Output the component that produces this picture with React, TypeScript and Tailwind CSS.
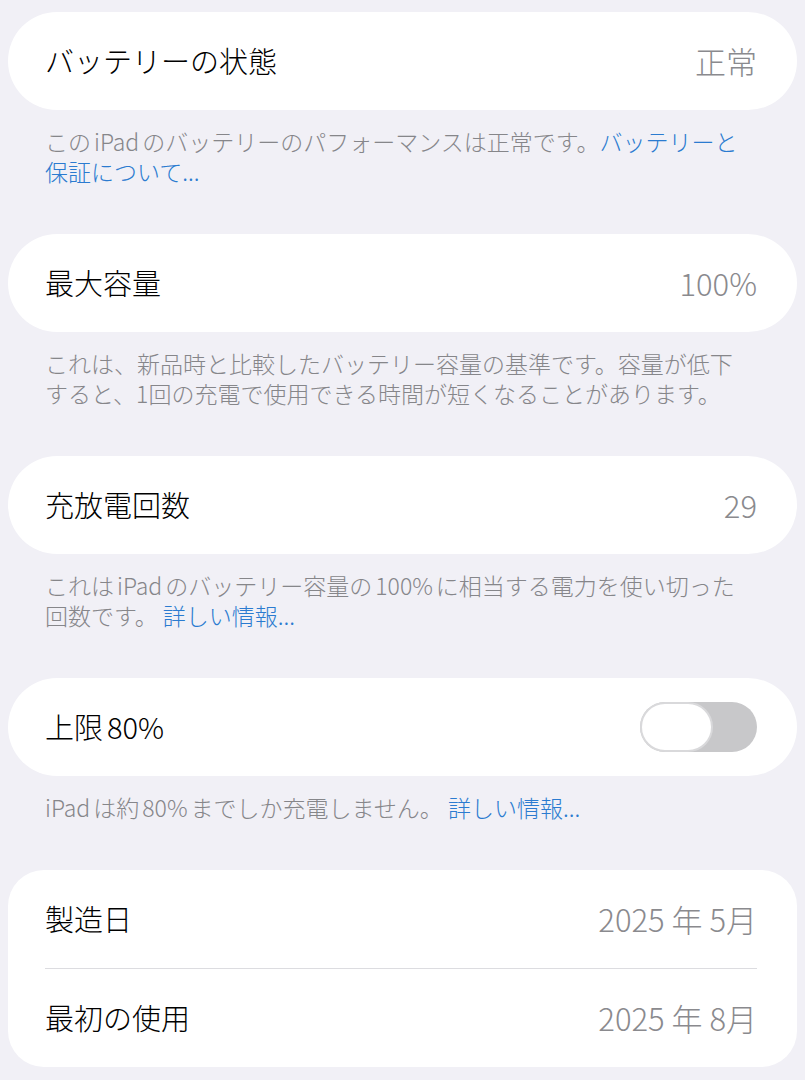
import type { ReactNode } from "react";

const FONT = { fontFamily: '"Noto Sans CJK JP", "Noto Sans", sans-serif' };

function Row({ label, value }: { label: ReactNode; value?: ReactNode }) {
  return (
    <div className="flex h-[98px] items-center justify-between pl-[37px] pr-[40px]">
      <span className="text-[29px] font-light text-black">{label}</span>
      {value}
    </div>
  );
}

function Value({ children }: { children: ReactNode }) {
  return <span className="text-[31px] font-light text-[#8a8a8e]">{children}</span>;
}

function Footer({ children }: { children: ReactNode }) {
  return (
    <p className="px-[37px] pt-4 text-[23px] font-light leading-[30px] text-[#86868a]">
      {children}
    </p>
  );
}

function Link({ children }: { children: ReactNode }) {
  return <span className="text-[#2b7bd0]">{children}</span>;
}

// 和文の中の欧文（前後に少しすき間）
function Latin({ children }: { children: ReactNode }) {
  return <span className="mx-[3px]">{children}</span>;
}

function Toggle() {
  return (
    <div className="flex h-[50px] w-[117px] items-center rounded-full bg-[#c8c8ca]">
      <div className="h-[50px] w-[73px] rounded-full border-2 border-[#d9d9db] bg-white" />
    </div>
  );
}

export default function App() {
  return (
    <div className="min-h-[1080px] bg-[#f1f0f6] px-2 pt-3" style={FONT}>
      {/* バッテリーの状態 */}
      <section className="mb-12">
        <div className="rounded-full bg-white">
          <Row label="バッテリーの状態" value={<Value>正常</Value>} />
        </div>
        <Footer>
          この<Latin>iPad</Latin>のバッテリーのパフォーマンスは正常です。<Link>バッテリーと</Link>
          <br />
          <Link>保証について...</Link>
        </Footer>
      </section>

      {/* 最大容量 */}
      <section className="mb-12">
        <div className="rounded-full bg-white">
          <Row label="最大容量" value={<Value>100%</Value>} />
        </div>
        <Footer>
          これは、新品時と比較したバッテリー容量の基準です。容量が低下
          <br />
          すると、1回の充電で使用できる時間が短くなることがあります。
        </Footer>
      </section>

      {/* 充放電回数 */}
      <section className="mb-12">
        <div className="rounded-full bg-white">
          <Row label="充放電回数" value={<Value>29</Value>} />
        </div>
        <Footer>
          これは<Latin>iPad</Latin>のバッテリー容量の<Latin>100%</Latin>に相当する電力を使い切った
          <br />
          回数です。 <Link>詳しい情報...</Link>
        </Footer>
      </section>

      {/* 上限80% */}
      <section className="mb-12">
        <div className="rounded-full bg-white">
          <Row
            label={
              <>
                上限<span className="ml-[4px]">80%</span>
              </>
            }
            value={<Toggle />}
          />
        </div>
        <Footer>
          <span className="mr-[3px]">iPad</span>は約<Latin>80%</Latin>までしか充電しません。{" "}
          <Link>詳しい情報...</Link>
        </Footer>
      </section>

      {/* 製造日 / 最初の使用 */}
      <section className="rounded-[36px] bg-white">
        <Row label="製造日" value={<Value>2025 年 5月</Value>} />
        <div className="ml-[37px] mr-[40px] h-px bg-[#dcdce0]" />
        <Row label="最初の使用" value={<Value>2025 年 8月</Value>} />
      </section>
    </div>
  );
}
